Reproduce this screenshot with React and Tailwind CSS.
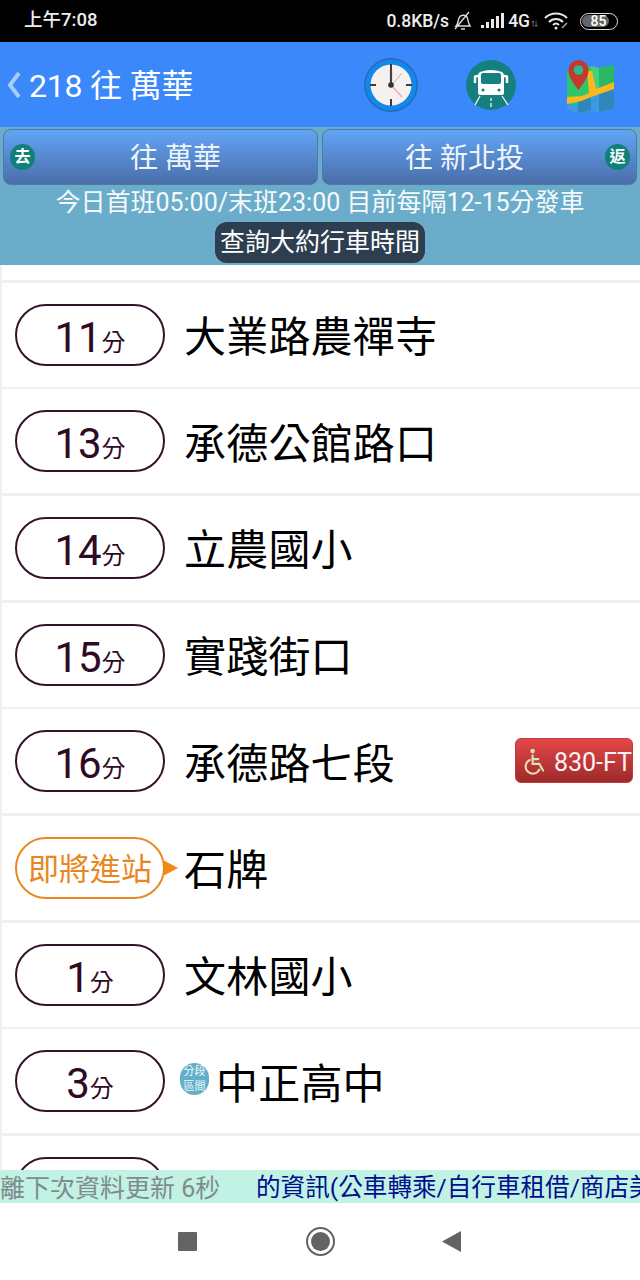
const FONT = "font-['Roboto','Noto_Sans_CJK_TC',sans-serif]";

function Clock() {
  return (
    <svg width="54" height="54" viewBox="0 0 54 54">
      <circle cx="27" cy="27" r="27" fill="#2a68b8" />
      <circle cx="27" cy="27" r="25.500" fill="#1288ea" />
      <circle cx="27" cy="27" r="20.500" fill="#f5f1ee" />
      <path d="M27 6v7M27 41v7M6 27h6M42 27h6" stroke="#3d3d3d" strokeWidth="2" />
      <path d="M27 28L27 12" stroke="#444" strokeWidth="2.200" />
      <path d="M27 28L38 15" stroke="#b5b5b5" strokeWidth="1" />
      <path d="M27 27L38 39" stroke="#f2a9a0" strokeWidth="1.200" />
      <circle cx="27" cy="27" r="2.800" fill="#333" />
    </svg>
  );
}

function BusIcon() {
  return (
    <svg width="50" height="50" viewBox="0 0 50 50">
      <circle cx="25" cy="25" r="25" fill="#168080" />
      <path d="M14 12q11-4 22 0q2 1 2 4v17q0 2-2 2H14q-2 0-2-2V16q0-3 2-4z" fill="#fff" />
      <rect x="15" y="13" width="20" height="11" rx="2" fill="#168080" />
      <path d="M9 23v-6q0-1 3-1M41 23v-6q0-1-3-1" stroke="#fff" strokeWidth="2.400" fill="none" />
      <circle cx="17" cy="30" r="1.600" fill="#168080" />
      <circle cx="33" cy="30" r="1.600" fill="#168080" />
      <path d="M14 36L9 45M36 36l6 9M25 38v3M25 43v4" stroke="#fff" strokeWidth="1.200" />
    </svg>
  );
}

function MapIcon() {
  return (
    <svg width="60" height="62" viewBox="0 0 60 62">
      <path d="M7 17l11-3 13-2 8 2 15-3v44l-15 3-8-2-13 3-11-4z" fill="#2fc56c" />
      <path d="M31 12l8 2v20l-8 4z" fill="#45cf7e" />
      <path d="M39 14l15-3v20l-15 5z" fill="#2bb866" />
      <path d="M7 50l11 0 13-8 8-3 15-6v22l-15 3-8-2-13 3-11-4z" fill="#3c9be0" />
      <path d="M18 48l13-5v13l-13 3z" fill="#2f86bb" />
      <path d="M39 39l15-6v22l-15 3z" fill="#2f86bb" />
      <path d="M7 43l15-1 7-3-2-22h5l4 18 18-7v7l-20 7-13 5-14 3z" fill="#fbb81a" />
      <path d="M18.500 36c-6-8-10-13-10-20a10 10 0 0 1 20 0c0 7-4 12-10 20z" fill="#c5392a" />
      <circle cx="18.500" cy="16" r="4.800" fill="#2eb88f" />
    </svg>
  );
}

function Wheelchair() {
  return (
    <svg width="24" height="28" viewBox="0 0 24 28" fill="none" strokeWidth="2.200" strokeLinecap="round">
      <circle cx="9" cy="3.500" r="2.400" fill="#d6e4b4" />
      <path d="M9 8v9h7l4 7" stroke="#d6e4b4" />
      <path d="M9 12h6" stroke="#d6e4b4" />
      <path d="M6 13a7.500 7.500 0 1 0 10 10" stroke="#f4dab0" />
    </svg>
  );
}

function Pill({ n }) {
  return (
    <div className="w-[150px] h-[62px] shrink-0 rounded-full border-2 border-[#35122c] flex items-center justify-center text-[#2e0a24] pt-[6px]">
      <span className="text-[42px] leading-none">{n}</span>
      <span className="text-[24px] leading-none mt-[10px]">分</span>
    </div>
  );
}

function Row({ n, name, seg, soon, bus }) {
  return (
    <div className="h-[104px] shrink-0 bg-white ml-[2px] flex items-center pl-[13px] relative">
      {soon ? (
        <div className="w-[150px] h-[62px] shrink-0 rounded-full border-2 border-[#e98a22] flex items-center justify-center text-[#e8871e] text-[31px] relative pt-[5px]">
          即將進站
          <span className="absolute left-[146px] top-[21px] w-0 h-0 border-y-[8px] border-y-transparent border-l-[15px] border-l-[#f08a12]" />
        </div>
      ) : (
        <Pill n={n} />
      )}
      {seg && (
        <div className="w-[29px] h-[32px] rounded-full bg-[#62b0c8] text-[#eef8fb] text-[11px] leading-[15px] flex items-center justify-center text-center ml-[15px] -mr-[12px] mb-[4px] shrink-0">
          分段<br />區間
        </div>
      )}
      <span className="text-[42px] leading-none text-black ml-[19px] pt-[7px] tracking-[0.2px]">{name}</span>
      {bus && (
        <div className="absolute left-[513px] top-[29px] w-[118px] h-[45px] rounded-[6px] bg-gradient-to-b from-[#e44848] to-[#9e2a2a] border border-[#c53a3a] flex items-center pl-[8px] gap-[7px] text-[#fdf2f2] text-[25px] overflow-hidden whitespace-nowrap">
          <Wheelchair />
          <span className="pt-[3px]">{bus}</span>
        </div>
      )}
    </div>
  );
}

function Tab({ children, badge, right }) {
  return (
    <div className={`flex-1 h-[56px] rounded-[8px] border border-[#4a7ba6] bg-gradient-to-b from-[#62a5f7] to-[#4a6ea8] text-[#eef5fb] text-[28px] flex items-center justify-center relative pt-[4px] ${right ? "pr-[30px]" : "pl-[30px]"}`}>
      {children}
      <span className={`absolute ${right ? "right-[6px]" : "left-[6px]"} top-[14px] w-[25px] h-[26px] rounded-full bg-[#11807a] text-white text-[16px] font-bold flex items-center justify-center`}>{badge}</span>
    </div>
  );
}

export default function App() {
  return (
    <div className={`w-[640px] h-[1280px] flex flex-col overflow-hidden bg-[#f0f0f0] ${FONT}`}>
      <div className="h-[42px] shrink-0 bg-black text-[#eee] flex items-center pl-[24px] pr-[22px] text-[18.500px] font-medium">
        <span>上午7:08</span>
        <div className="ml-auto flex items-center text-[17.500px]">
          <span>0.8KB/s</span>
          <svg className="ml-[4px]" width="20" height="22" viewBox="0 0 20 22" fill="none" stroke="#ddd" strokeWidth="1.400">
            <path d="M3 16c2-2 2-5 3-8 1-3 6-4 8-1 1 2 1 6 3 9zM8 19h4M2 19L16 2" />
          </svg>
          <svg className="ml-[8px]" width="24" height="16" viewBox="0 0 24 16" fill="#e8e8e8">
            <rect x="0" y="12" width="3" height="3" />
            <rect x="5" y="9" width="3" height="6" />
            <rect x="10" y="6" width="3" height="9" />
            <rect x="15" y="3" width="3" height="12" />
            <rect x="20" y="0" width="3" height="15" />
          </svg>
          <span className="ml-[3px]">4G</span>
          <span className="text-[7px] text-[#888] ml-[1px] mt-[6px] w-[10px]">⇅</span>
          <svg className="ml-[3px]" width="26" height="18" viewBox="0 0 26 18" fill="none" stroke="#e8e8e8" strokeWidth="2">
            <path d="M1 6c6-6 16-6 22 0M5 10c4-4 10-4 14 0M9 13c2-2 4-2 6 0" />
            <circle cx="12" cy="16" r="1.500" fill="#e8e8e8" stroke="none" />
            <path d="M18 16l5-5" strokeWidth="1.400" stroke="#aaa" />
          </svg>
          <div className="ml-[10px] w-[38px] h-[17px] rounded-full border-[1.500px] border-[#ddd] flex items-center p-[1px]">
            <span className="w-[27px] h-[12px] rounded-full bg-[#666] flex items-center justify-center text-[14px] leading-none pl-[6px] text-white">85</span>
          </div>
        </div>
      </div>

      <div className="h-[85px] shrink-0 bg-[#3b88fb] flex items-center pl-[7px] text-white text-[32px]">
        <svg width="14" height="26" viewBox="0 0 14 26" fill="none" stroke="#a6cdfb" strokeWidth="4">
          <path d="M12 1L3 13l9 12" />
        </svg>
        <span className="ml-[8px] pt-[2px] tracking-[-0.2px]">218 往 萬華</span>
        <div className="ml-auto flex items-center">
          <Clock />
          <div className="ml-[48px]"><BusIcon /></div>
          <div className="ml-[44px] mr-[20px] mt-[1px]"><MapIcon /></div>
        </div>
      </div>

      <div className="h-[138px] shrink-0 bg-[#6aacc9] flex flex-col items-center pt-[2px] px-[3px]">
        <div className="w-full flex gap-[4px]">
          <Tab badge="去">往 萬華</Tab>
          <Tab badge="返" right>往 新北投</Tab>
        </div>
        <div className="text-[25px] leading-[36px] text-[#f4fafc] whitespace-nowrap">今日首班05:00/末班23:00 目前每隔12-15分發車</div>
        <div className="w-[210px] h-[41px] mt-[1px] rounded-[12px] bg-[#2c3e50] text-white text-[25px] flex items-center justify-center">查詢大約行車時間</div>
      </div>

      <div className="h-[905px] shrink-0 overflow-hidden flex flex-col gap-[2.670px]">
        <div className="h-[15px] shrink-0 bg-white ml-[2px]" />
        <Row n="11" name="大業路農禪寺" />
        <Row n="13" name="承德公館路口" />
        <Row n="14" name="立農國小" />
        <Row n="15" name="實踐街口" />
        <Row n="16" name="承德路七段" bus="830-FT" />
        <Row soon name="石牌" />
        <Row n="1" name="文林國小" />
        <Row n="3" name="中正高中" seg />
        <Row n="5" name="" />
      </div>

      <div className="h-[33px] shrink-0 bg-[#c2f2e3] flex items-center overflow-hidden whitespace-nowrap leading-none pt-[3px]">
        <span className="w-[256px] shrink-0 text-[#7f8c8d] text-[25px]">離下次資料更新 6秒</span>
        <span className="text-[#000f8f] text-[24.600px]">的資訊(公車轉乘/自行車租借/商店美食)</span>
      </div>

      <div className="flex-1 bg-white flex items-center justify-center">
        <div className="w-[19px] h-[19px] bg-[#636363] rounded-[1px] ml-[-2px]" />
        <div className="ml-[109px] w-[29px] h-[29px] rounded-full border-[2.500px] border-[#636363] flex items-center justify-center">
          <div className="w-[19px] h-[19px] rounded-full bg-[#636363]" />
        </div>
        <svg className="ml-[107px]" width="19" height="21" viewBox="0 0 19 21">
          <path d="M19 0v21L0 10.500z" fill="#636363" />
        </svg>
      </div>
    </div>
  );
}
